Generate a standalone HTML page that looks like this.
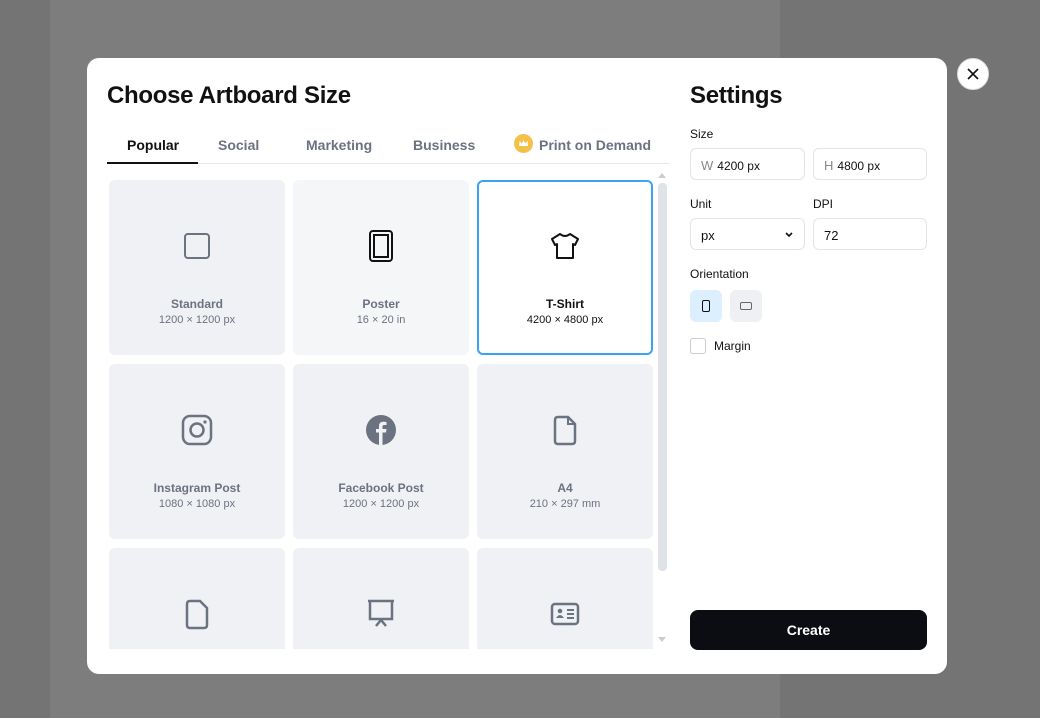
<!DOCTYPE html>
<html><head><meta charset="utf-8"><style>
*{box-sizing:border-box;margin:0;padding:0}
body{width:1040px;height:718px;overflow:hidden;background:#747474;font-family:"Liberation Sans",sans-serif;position:relative}
.band{position:absolute;left:50px;top:0;width:730px;height:718px;background:#7d7d7d}
.modal{position:absolute;left:87px;top:58px;width:860px;height:616px;background:#fff;border-radius:12px;overflow:hidden}
.close{position:absolute;left:957px;top:58px;width:32px;height:32px;border-radius:50%;background:#fff;border:1px solid #ddd}
.title{position:absolute;left:20px;top:24px;font-size:24px;font-weight:700;color:#111;letter-spacing:-0.3px}
.tabs{position:absolute;left:20px;top:76px;width:563px;height:30px;border-bottom:1px solid #e5e7eb}
.tab{position:absolute;top:3px;font-size:14px;color:#6b7280;font-weight:700}
.tab.on{color:#111}
.ul{position:absolute;left:0;bottom:-1px;width:91px;height:2px;background:#111}
.card{position:absolute;width:176px;height:175px;background:#f0f1f4;border-radius:6px;text-align:center}
.card svg{position:absolute;left:72px;top:50px}
.card .n{position:absolute;left:0;right:0;top:117px;font-size:12px;font-weight:700;color:#6b7280}
.card .d{position:absolute;left:0;right:0;top:134px;font-size:11px;color:#6b7280}
.lbl{position:absolute;font-size:12px;color:#111}
.inp{position:absolute;width:115px;height:32px;border:1px solid #e2e4e8;border-radius:6px;font-size:12px;color:#111;padding:9px 10px}
.g{color:#888;margin-right:4px;font-size:13px}
</style></head><body>
<div class="band"></div>
<div class="modal">
<div class="title">Choose Artboard Size</div>
<div class="tabs">
<div class="ul"></div>
<div class="tab on" style="left:20px">Popular</div>
<div class="tab" style="left:111px">Social</div>
<div class="tab" style="left:199px">Marketing</div>
<div class="tab" style="left:306px">Business</div>
<div style="position:absolute;left:407px;top:0;width:19px;height:19px;border-radius:50%;background:#f5c04a"><svg width="19" height="19" viewBox="0 0 19 19"><path d="M5 12 L5.5 7 L8 9.5 L9.5 6 L11 9.5 L13.5 7 L14 12Z" fill="#fff"/></svg></div>
<div class="tab" style="left:432px">Print on Demand</div>
</div>
<div style="position:absolute;left:0;top:108px;width:600px;height:483px;overflow:hidden">
<div class="card" style="left:22px;top:14px"><svg width="32" height="32" viewBox="0 0 32 32"><rect x="4" y="4" width="24" height="24" rx="3" fill="none" stroke="#6b7280" stroke-width="2"/></svg><div class="n">Standard</div><div class="d">1200 × 1200 px</div></div>
<div class="card" style="left:206px;top:14px;background:#f5f6f8"><svg width="32" height="32" viewBox="0 0 32 32"><rect x="5" y="1" width="22" height="30" rx="3" fill="none" stroke="#111" stroke-width="2"/><rect x="9" y="5" width="14" height="22" fill="none" stroke="#111" stroke-width="2"/></svg><div class="n">Poster</div><div class="d">16 × 20 in</div></div>
<div class="card" style="left:390px;top:14px;background:#fff;border:2px solid #3ba4f2"><svg width="32" height="32" viewBox="0 0 32 32" style="left:70px;top:48px"><path d="M11 4 Q16 8 21 4 L29 9 L26 15 L24 14 L24 28 L8 28 L8 14 L6 15 L3 9Z" fill="none" stroke="#111" stroke-width="2" stroke-linejoin="round"/></svg><div class="n" style="color:#111;top:115px">T-Shirt</div><div class="d" style="color:#111;top:132px">4200 × 4800 px</div></div>
<div class="card" style="left:22px;top:198px"><svg width="32" height="32" viewBox="0 0 32 32"><rect x="2" y="2" width="28" height="28" rx="7" fill="none" stroke="#6b7280" stroke-width="2.5"/><circle cx="16" cy="16" r="6.5" fill="none" stroke="#6b7280" stroke-width="2.5"/><circle cx="24" cy="8" r="1.6" fill="#6b7280"/></svg><div class="n">Instagram Post</div><div class="d">1080 × 1080 px</div></div>
<div class="card" style="left:206px;top:198px"><svg width="32" height="32" viewBox="0 0 32 32"><circle cx="16" cy="16" r="15" fill="#6b7280"/><path d="M17.5 31 V18.5 H21 L21.5 15 H17.5 V12.5 Q17.5 11 19 11 H21.5 V8 Q19.5 7.7 18 7.8 Q14 8 14 12 V15 H11 V18.5 H14 V31Z" fill="#f0f1f4"/></svg><div class="n">Facebook Post</div><div class="d">1200 × 1200 px</div></div>
<div class="card" style="left:390px;top:198px"><svg width="32" height="32" viewBox="0 0 32 32"><path d="M9 3 H19 L26 10 V27 Q26 30 23 30 H9 Q6 30 6 27 V6 Q6 3 9 3Z" fill="none" stroke="#6b7280" stroke-width="2.5"/><path d="M19 3 V10 H26" fill="none" stroke="#6b7280" stroke-width="2"/></svg><div class="n">A4</div><div class="d">210 × 297 mm</div></div>
<div class="card" style="left:22px;top:382px"><svg width="32" height="32" viewBox="0 0 32 32"><path d="M9 3 H19 L26 10 V27 Q26 30 23 30 H9 Q6 30 6 27 V6 Q6 3 9 3Z" fill="none" stroke="#6b7280" stroke-width="2.5"/></svg></div>
<div class="card" style="left:206px;top:382px"><svg width="32" height="32" viewBox="0 0 32 32"><path d="M3 3 H29 M5 3 V21 H27 V3 M11 28 L16 22 L21 28" fill="none" stroke="#6b7280" stroke-width="2.5"/></svg></div>
<div class="card" style="left:390px;top:382px"><svg width="32" height="32" viewBox="0 0 32 32"><rect x="3" y="6" width="26" height="20" rx="3" fill="none" stroke="#6b7280" stroke-width="2.5"/><circle cx="11" cy="13" r="2.3" fill="#6b7280"/><path d="M7 20 Q11 14 15 20Z" fill="#6b7280"/><path d="M18 12 H25 M18 16 H25 M18 20 H25" stroke="#6b7280" stroke-width="2"/></svg></div>
</div>
<div style="position:absolute;left:571px;top:125px;width:9px;height:388px;background:#dfe2e7;border-radius:4px"></div>
<div style="position:absolute;left:571px;top:111px;border:4px solid transparent;border-bottom:5px solid #ccc"></div>
<div style="position:absolute;left:571px;top:579px;border:4px solid transparent;border-top:5px solid #ccc"></div>

<div class="title" style="left:603px">Settings</div>
<div class="lbl" style="left:603px;top:69px">Size</div>
<div class="inp" style="left:603px;top:90px"><span class="g">W</span>4200 px</div>
<div class="inp" style="left:726px;top:90px;width:114px"><span class="g">H</span>4800 px</div>
<div class="lbl" style="left:603px;top:139px">Unit</div>
<div class="lbl" style="left:726px;top:139px">DPI</div>
<div class="inp" style="left:603px;top:160px;font-size:13px">px<svg style="position:absolute;right:10px;top:12px" width="10" height="8" viewBox="0 0 10 8"><path d="M2 2 L5 5 L8 2" fill="none" stroke="#111" stroke-width="1.6"/></svg></div>
<div class="inp" style="left:726px;top:160px;width:114px;font-size:13px">72</div>
<div class="lbl" style="left:603px;top:209px">Orientation</div>
<div style="position:absolute;left:603px;top:232px;width:32px;height:32px;border-radius:6px;background:#dcefff"><div style="position:absolute;left:12px;top:10px;width:8px;height:12px;border:1.5px solid #111;border-radius:2px"></div></div>
<div style="position:absolute;left:643px;top:232px;width:32px;height:32px;border-radius:6px;background:#eef0f3"><div style="position:absolute;left:10px;top:12px;width:12px;height:8px;border:1.5px solid #666;border-radius:2px"></div></div>
<div style="position:absolute;left:603px;top:280px;width:16px;height:16px;border:1px solid #ccc;border-radius:3px"></div>
<div class="lbl" style="left:627px;top:281px">Margin</div>
<div style="position:absolute;left:603px;top:552px;width:237px;height:40px;background:#0b0d12;border-radius:8px;color:#fff;font-size:14px;font-weight:700;text-align:center;line-height:40px">Create</div>
</div>
<div class="close"><svg width="30" height="30" viewBox="0 0 30 30"><path d="M10 10 L20 20 M20 10 L10 20" stroke="#111" stroke-width="1.6"/></svg></div>
</body></html>
